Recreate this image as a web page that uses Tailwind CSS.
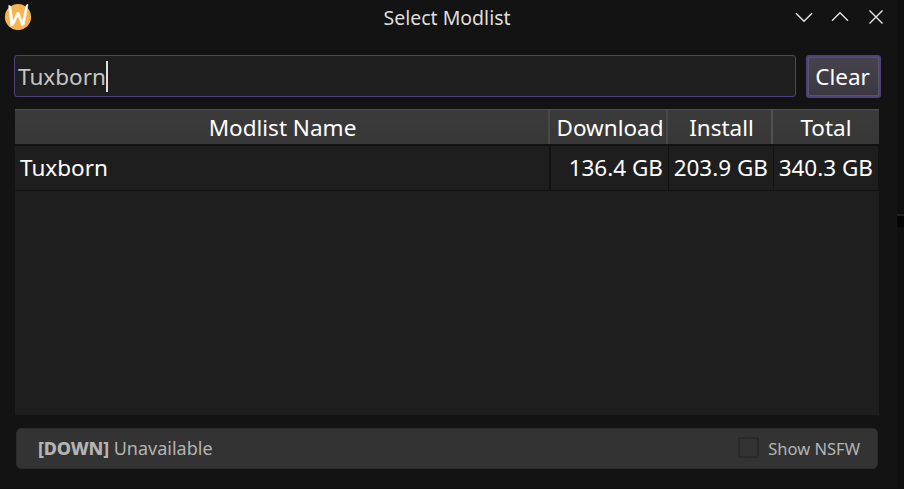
<!DOCTYPE html>
<html lang="en">
<head>
<meta charset="utf-8">
<title>Select Modlist</title>
<script src="https://cdn.jsdelivr.net/npm/@tailwindcss/browser@4"></script>
</head>
<body class="w-[904px] h-[489px] overflow-hidden bg-[#0f0f0f] font-['Noto_Sans',sans-serif] text-white">
<div class="flex h-[489px]">
<main class="flex flex-col w-[897px] h-[488px] bg-[#131313]">
  <header class="grid grid-cols-[100px_1fr_100px] items-center h-[36px] pl-[4px] pr-[7px] shrink-0">
    <svg class="w-[28px] h-[28px] mb-1" viewBox="0 0 28 28"><circle cx="14" cy="15" r="13.1" fill="#f5b44d"/><path d="M4.7 3.5 6.5 4 9.2 19.6 12.8 10.5 15 10.5 18.2 20 22.3 3 24 2.4 20.2 22.8 17.8 23.5 13.9 13.6 9.8 22.7 6.8 24.2Z" fill="#fff" stroke="#fff" stroke-width=".6" stroke-linejoin="round"/></svg>
    <h1 class="text-center text-[19.5px] leading-[36px] text-[#dedede]">Select Modlist</h1>
    <svg class="w-[100px] h-[36px]" viewBox="790 0 100 36" fill="none" stroke="#e6e6e6" stroke-width="1.4"><path d="M796 13.3l8 8 8-8M832 20.7l8-8 8 8M869.5 10.5l13 13M882.5 10.5l-13 13"/></svg>
  </header>
  <div class="flex gap-[10px] pl-[14px] pt-[19px] h-[73px] shrink-0">
    <div class="flex items-center w-[782px] h-[42px] border border-[#50407d] rounded-[3px] bg-[#1e1e1e] pl-[3px] text-[22.5px] text-[#c5c5c5]"><span class="pt-[2px]">Tuxborn</span><i class="w-[2px] h-[31px] bg-[#dedede]"></i></div>
    <button class="w-[75px] h-[43px] pr-[2px] rounded-[3px] border-2 border-[#50407d] shadow-[inset_0_0_0_1px_#58556a] bg-linear-to-b from-[#46434c] to-[#3b3841] text-[22.5px] leading-[40px]">Clear</button>
  </div>
  <section class="ml-[15px] w-[864px] h-[306px] bg-[#1e1e1e] text-[22.5px] shrink-0">
    <div class="grid grid-cols-[535px_118px_105px_106px] h-[35px] bg-linear-to-b from-[#3b3b3b] to-[#373737] border-t border-[#515151] text-center leading-[36px]">
      <div class="pl-[2px] h-[34px] border-r-2 border-[#494949]">Modlist Name</div><div class="pl-[4px] h-[34px] border-r-2 border-[#494949]">Download</div><div class="pl-[4px] h-[34px] border-r-2 border-[#515151]">Install</div><div>Total</div>
    </div>
    <div class="grid grid-cols-[536px_118px_105px_105px] h-[47px] border-t-2 border-b border-[#121212] leading-[43px] text-right">
      <div class="pl-[5px] text-left border-r-2 border-[#121212]">Tuxborn</div><div class="pr-[5px] border-r border-[#121212]">136.4 GB</div><div class="pr-[5px] border-r border-[#121212]">203.9 GB</div><div class="pr-[5px] border-r border-[#121212]">340.3 GB</div>
    </div>
  </section>
  <footer class="flex items-center mt-[13px] ml-[16px] w-[862px] h-[41px] rounded-[5px] bg-[#333] border border-[#2b2b2b] pl-[21px] pr-[17px] text-[#b4b4b4] shrink-0">
    <span class="text-[18px]"><b class="font-extrabold tracking-[-0.15px]">[DOWN]</b> Unavailable</span>
    <label class="ml-auto flex items-center gap-[9px] text-[16.5px]"><i class="w-[21px] h-[21px] mb-[2px] border-2 border-[#2a2a2a]"></i><span class="pt-[2px]">Show NSFW</span></label>
  </footer>
</main>
<aside class="w-[7px] pt-[214px]"><div class="h-[13px] border-t-2 border-[#222] bg-[#050505]"></div></aside>
</div>
</body>
</html>
